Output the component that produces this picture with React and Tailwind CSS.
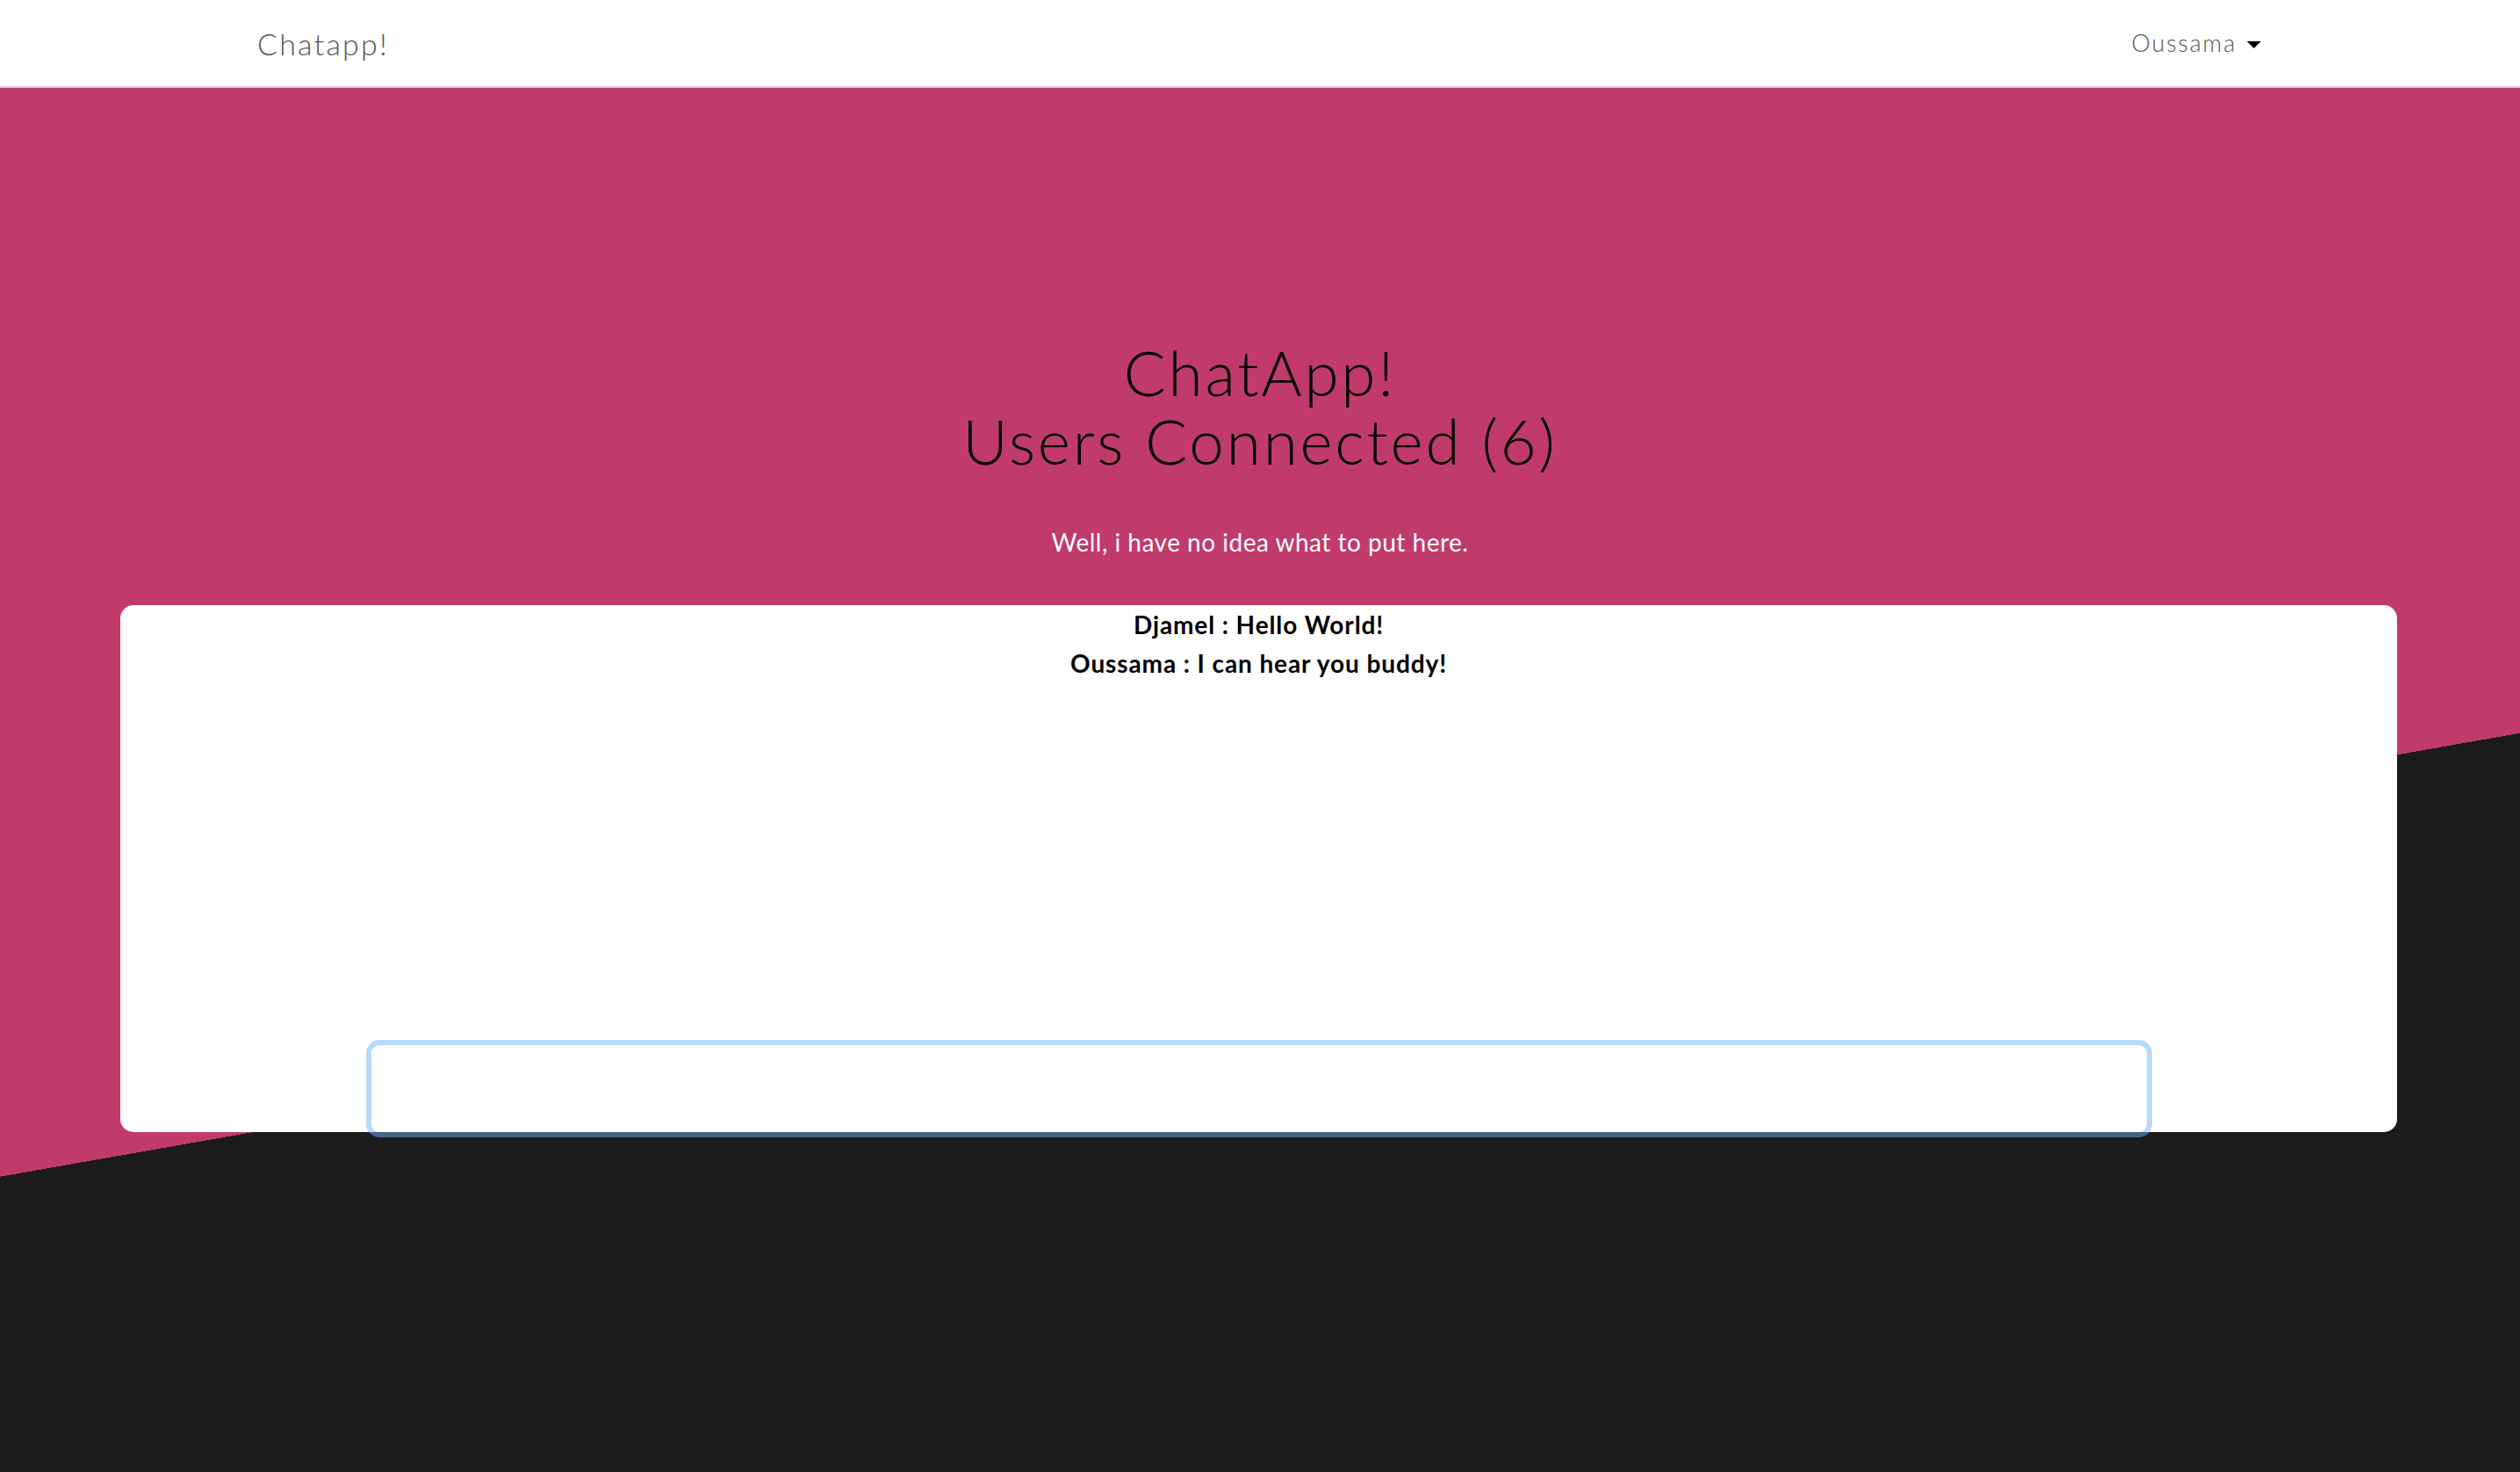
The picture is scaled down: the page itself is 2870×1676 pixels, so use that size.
import { useState } from 'react';

const messages = [
  { user: 'Djamel', text: 'Hello World!' },
  { user: 'Oussama', text: 'I can hear you buddy!' },
];

const Navbar = () => (
  <nav className="h-[100px] bg-white border-b-2 border-[#d3d9df]">
    <div className="h-full px-[293px] flex items-center justify-between">
      <a className="text-[34px] font-light text-[#555] tracking-[2.2px]">Chatapp!</a>
      <button className="flex items-center gap-[12px] text-[27px] font-light text-[#555] tracking-[1.8px]">
        Oussama
        {/* caret */}
        <span className="w-0 h-0 border-l-[8px] border-r-[8px] border-t-[8px] border-l-transparent border-r-transparent border-t-black mt-[3px] mr-[2px]" />
      </button>
    </div>
  </nav>
);

export default function App() {
  const [draft, setDraft] = useState('');

  return (
    <div className="min-h-screen font-['Lato','Liberation_Sans',sans-serif]">
      <Navbar />

      {/* Hero + chat, diagonal pink/dark background */}
      <main className="h-[1576px] bg-[linear-gradient(170.02deg,#c03b6b_1221px,#1b1b1b_1221px)] pt-[285px]">
        <div className="text-center">
          <h1 className="text-[71px] leading-[78px] font-light text-black tracking-[2.8px]">
            ChatApp!
            <br />
            Users Connected (6)
          </h1>
          <p className="mt-[56px] text-[28px] leading-[40px] text-white tracking-[0.5px]">
            Well, i have no idea what to put here.
          </p>
        </div>

        <section className="mt-[52px] ml-[137px] w-[2593px] h-[600px] rounded-[15px] bg-white flex flex-col">
          <ul className="text-center">
            {messages.map((m, i) => (
              <li key={i} className="text-[28px] leading-[44px] font-bold text-black tracking-[0.9px]">
                {m.user} : {m.text}
              </li>
            ))}
          </ul>

          <input
            type="text"
            value={draft}
            onChange={(e) => setDraft(e.target.value)}
            className="mt-auto mb-[-6px] ml-[280px] w-[2034px] h-[111px] rounded-[15px] border-[6px] border-[rgba(110,180,249,0.49)] bg-transparent outline-none px-5 text-[28px]"
          />
        </section>
      </main>
    </div>
  );
}
